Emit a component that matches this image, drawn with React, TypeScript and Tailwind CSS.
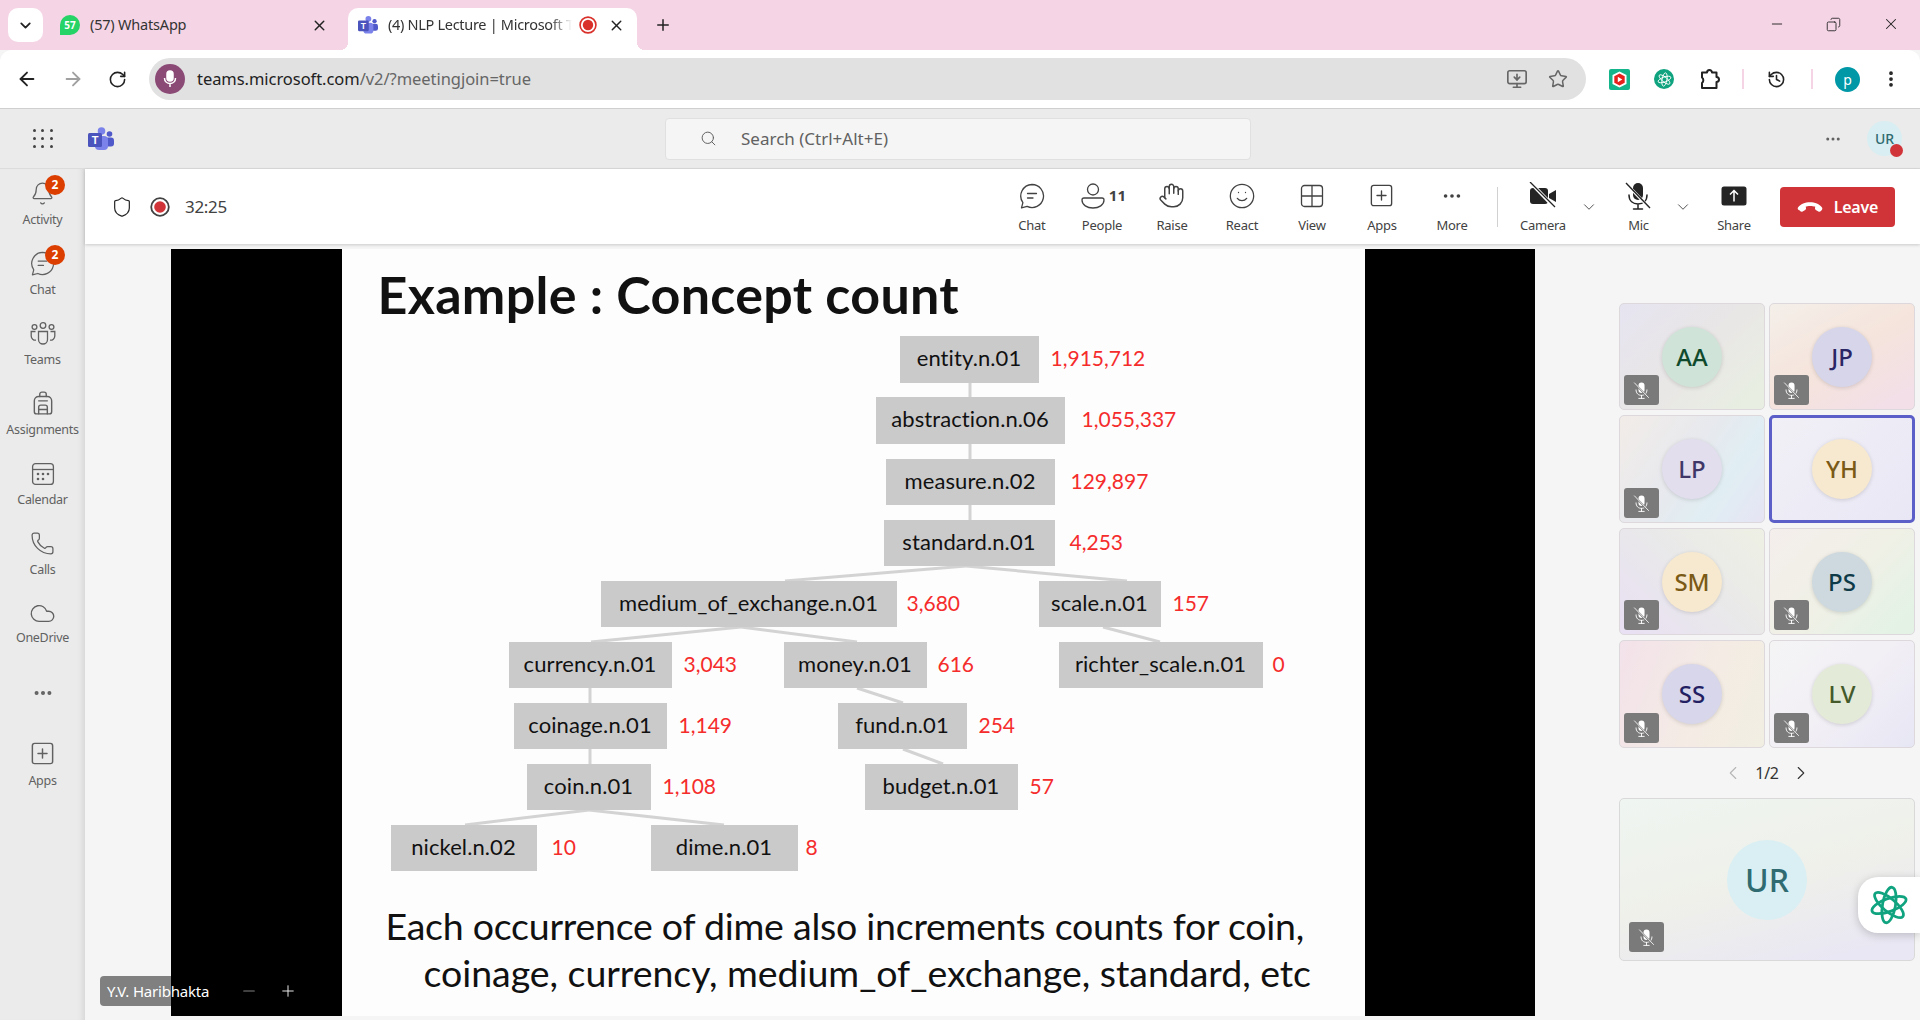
import React, { ReactNode } from 'react';
import {
  ArrowLeft, ArrowRight, RotateCw, Star, MonitorDown, History, EllipsisVertical, Ellipsis, Search, Bell, Backpack,
  Cloud, Phone, Shield, Hand, Smile, SquarePlus, ChevronDown, ChevronLeft, ChevronRight, X, Plus, Minus, Copy,
} from 'lucide-react';

const Gpt = ({ size, color, stroke = 2.8 }: { size: number; color: string; stroke?: number }) => (
  <svg width={size} height={size} viewBox="0 0 40 40" fill="none" stroke={color} strokeWidth={stroke}>
    <ellipse cx="20" cy="20" rx="18" ry="6.5" transform="rotate(100 20 20)" />
    <ellipse cx="20" cy="20" rx="18" ry="6.5" transform="rotate(40 20 20)" />
    <ellipse cx="20" cy="20" rx="18" ry="6.5" transform="rotate(160 20 20)" />
  </svg>
);

const TeamsLogo = ({ size }: { size: number }) => (
  <svg width={size} height={size} viewBox="0 0 26 24">
    <circle cx="21.5" cy="7" r="2.8" fill="#5059c9" />
    <rect x="17" y="10.5" width="9" height="9" rx="3" fill="#5059c9" />
    <circle cx="13.5" cy="4" r="3.8" fill="#7b83eb" />
    <rect x="7" y="9" width="13" height="14" rx="4" fill="#7b83eb" />
    <rect x="0" y="6" width="14" height="14" rx="1.5" fill="#4b53bc" />
    <text x="7" y="17" textAnchor="middle" fontSize="11" fontWeight="700" fill="#fff" fontFamily="'Liberation Sans', sans-serif">T</text>
  </svg>
);

const ChatIcon = ({ size = 26 }: { size?: number }) => (
  <svg width={size} height={size} viewBox="0 0 26 26" fill="none" stroke="currentColor" strokeWidth="1.3" strokeLinecap="round" strokeLinejoin="round">
    <path d="M13 1.5a11.5 11.5 0 1 1-4.9 21.9l-5.6 1.4 1.4-5.2A11.5 11.5 0 0 1 13 1.5Z" />
    <path d="M8.5 10.5h9M8.5 15h5.5" />
  </svg>
);

const PeopleIcon = () => (
  <svg width="24" height="26" viewBox="0 0 24 26" fill="none" stroke="currentColor" strokeWidth="1.3">
    <circle cx="12" cy="6.5" r="5.5" />
    <path d="M3 15h18a2 2 0 0 1 2 2c0 5-5 8-11 8S1 22 1 17a2 2 0 0 1 2-2Z" />
  </svg>
);

const TeamsIcon = () => (
  <svg width="26" height="24" viewBox="0 0 26 24" fill="none" stroke="currentColor" strokeWidth="1.3">
    <circle cx="13" cy="3.5" r="2.8" />
    <circle cx="4.5" cy="5" r="2.4" />
    <circle cx="21.5" cy="5" r="2.4" />
    <path d="M8.5 9.5h9v8a4.5 4.5 0 0 1-9 0Z" />
    <path d="M5.5 9.5H1.2v4.5a4.2 4.2 0 0 0 4.8 4.1M20.5 9.5h4.3v4.5a4.2 4.2 0 0 1-4.8 4.1" />
  </svg>
);

const CalendarIcon = () => (
  <svg width="24" height="24" viewBox="0 0 24 24" fill="none" stroke="currentColor" strokeWidth="1.3">
    <rect x="1.6" y="1.6" width="20.8" height="20.8" rx="3" />
    <path d="M1.6 7.5h20.8" />
    <g fill="currentColor" stroke="none">
      <circle cx="7" cy="12" r="1.3" /><circle cx="12" cy="12" r="1.3" /><circle cx="17" cy="12" r="1.3" />
      <circle cx="7" cy="17" r="1.3" /><circle cx="12" cy="17" r="1.3" />
    </g>
  </svg>
);

const ViewIcon = () => (
  <svg width="24" height="24" viewBox="0 0 24 24" fill="none" stroke="currentColor" strokeWidth="1.3">
    <rect x="1.5" y="1.5" width="21" height="21" rx="3" />
    <path d="M12 1.5v21M1.5 12h21" />
  </svg>
);

const ExtPuzzle = () => (
  <svg width="22" height="22" viewBox="0 0 22 22" fill="none" stroke="#222" strokeWidth="2" strokeLinejoin="round">
    <path d="M3 4.500h5a2.500 2.500 0 0 1 5 0h4.500V9a2.500 2.500 0 0 1 0 5v6H3v-5a3.500 3.500 0 0 0 0-5.500Z" />
  </svg>
);

const ExtPlay = () => (
  <svg width="21" height="21" viewBox="0 0 21 21">
    <rect width="21" height="21" rx="2" fill="#14b58a" />
    <path d="M10.500 2.500 17.500 6v9l-7 3.500L3.500 15V6Z" fill="#fff" />
    <path d="M10.500 4.500 15.700 7.200v6.600l-5.200 2.700-5.200-2.700V7.200Z" fill="#e8201c" />
    <path d="M8.800 7.800l4.500 2.700-4.500 2.700Z" fill="#fff" />
  </svg>
);

const CameraOff = () => (
  <svg width="28" height="28" viewBox="0 0 28 28" fill="none">
    <rect x="1" y="6" width="18" height="16" rx="3" fill="#242424" />
    <path d="M20 12l7-4v12l-7-4Z" fill="#242424" />
    <path d="M2 1l24 25" stroke="#fff" strokeWidth="3.5" />
    <path d="M1 0l25 25" stroke="#242424" strokeWidth="1.3" />
  </svg>
);

const MicOff = ({ size = 28, color = '#242424', gap = '#fff' }: { size?: number; color?: string; gap?: string }) => (
  <svg width={size} height={size} viewBox="0 0 28 28" fill="none">
    <rect x="9" y="1" width="10" height="17" rx="5" fill={color} />
    <path d="M5 13c0 6 4 9 9 9s9-3 9-9M14 22v5M9.5 27h9" stroke={color} strokeWidth="1.5" strokeLinecap="round" />
    <path d="M3 2.5l24 25" stroke={gap} strokeWidth="3" />
    <path d="M2 1l24 25" stroke={color} strokeWidth="1.4" />
  </svg>
);

const ShareIcon = () => (
  <svg width="26" height="20" viewBox="0 0 26 20">
    <rect x="0.5" y="0.5" width="25" height="19" rx="2.5" fill="#242424" />
    <path d="M13 15.5V5M9 8.5l4-4 4 4" fill="none" stroke="#fff" strokeWidth="1.5" />
  </svg>
);

const HangUp = () => (
  <svg width="26" height="12" viewBox="0 0 26 12" fill="#fff">
    <path d="M1 6.500C6-.5 20-.5 25 6.500c.6 1 .3 2-.4 2.800l-1 1c-.6.6-1.500.6-2.200.2l-2.600-1.600c-.6-.4-.9-1-.8-1.700l.2-1.600C15.500 4.700 10.500 4.700 8.800 5.600l.2 1.600c.1.7-.2 1.300-.8 1.700l-2.600 1.600c-.7.4-1.600.4-2.200-.2l-1-1C.7 8.500.4 7.500 1 6.500Z" />
  </svg>
);

const RecordDot = ({ ring, dot, size }: { ring: string; dot: string; size: number }) => (
  <svg width={size} height={size} viewBox="0 0 20 20">
    <circle cx="10" cy="10" r="8.8" fill="#fff" stroke={ring} strokeWidth="1.8" />
    <circle cx="10" cy="10" r="5.8" fill={dot} />
  </svg>
);

const RailItem = ({ label, icon, badge, h = 'h-[70px]', iconH = 'h-[39px]' }: { label: string; icon: ReactNode; badge?: boolean; h?: string; iconH?: string }) => (
  <div className={`relative flex flex-col items-center justify-start ${h} text-[#616161]`}>
    <div className={`flex ${iconH} items-end justify-center pb-[2px]`}>{icon}</div>
    <span className="mt-[4px] text-[12.5px] leading-[16px] tracking-[-0.3px]">{label}</span>
    {badge && (
      <span className="absolute left-[45px] top-[6px] flex h-5 w-5 items-center justify-center rounded-full bg-[#dc3e00] text-[12px] font-bold text-white">2</span>
    )}
  </div>
);

const BarButton = ({ label, icon, w = 'w-[70px]' }: { label: string; icon: ReactNode; w?: string }) => (
  <div className={`flex ${w} flex-col items-center text-[#424242]`}>
    <div className="flex h-[30px] items-center justify-center">{icon}</div>
    <span className="mt-[6px] text-[13px] leading-[16px] tracking-[-0.25px]">{label}</span>
  </div>
);

const Badge = ({ className }: { className: string }) => (
  <div className={`absolute flex h-[30px] w-[35px] items-center justify-center rounded-[3px] bg-[#7a7a7a] ${className}`}>
    <MicOff size={17} color="#fff" gap="#7a7a7a" />
  </div>
);

const tiles = [
  { t: 'AA', h: 'h-[107px]', bg: 'bg-[linear-gradient(135deg,#e6e4f0,#e9e6e6_50%,#e8eee2_90%)]', c: 'bg-[#d0e3d8] text-[#0f4a2c]' },
  { t: 'JP', h: 'h-[107px]', bg: 'bg-[linear-gradient(150deg,#f4efe9,#f5e4dc_50%,#f2dfe8_90%)]', c: 'bg-[#d6d5ea] text-[#2a2564]' },
  { t: 'LP', h: 'h-[108px]', bg: 'bg-[linear-gradient(125deg,#f2ece8,#e7e9ee_45%,#e0eef3_70%,#e6e4f4)]', c: 'bg-[#e2deee] text-[#3f3768]' },
  { t: 'YH', h: 'h-[108px]', bg: 'bg-[linear-gradient(135deg,#f1f0f6,#e9e7f5)]', c: 'bg-[#f7e9cf] text-[#7a5a16]', active: true },
  { t: 'SM', h: 'h-[107px]', bg: 'bg-[linear-gradient(45deg,#e9e0f4,#e9e8ea_50%,#eef0e4)]', c: 'bg-[#f7e9cf] text-[#7a5a16]' },
  { t: 'PS', h: 'h-[107px]', bg: 'bg-[linear-gradient(135deg,#f4eeec,#f0f0e6_50%,#e4f2e6_90%)]', c: 'bg-[#cdd9de] text-[#0f3a48]' },
  { t: 'SS', h: 'h-[108px]', bg: 'bg-[linear-gradient(110deg,#f3e2ea,#f4ece4_60%,#f1eee2)]', c: 'bg-[#d7d6ea] text-[#241f63]' },
  { t: 'LV', h: 'h-[108px]', bg: 'bg-[linear-gradient(135deg,#f4f4f5,#f2eff5_50%,#e7e6f4)]', c: 'bg-[#e4ead8] text-[#445a2a]' },
];

const nodes = [
  { t: 'entity.n.01', c: 'left-[558px] top-[87px] w-[139px] h-[47px]' },
  { t: 'abstraction.n.06', c: 'left-[534px] top-[148px] w-[189px] h-[47px]' },
  { t: 'measure.n.02', c: 'left-[544px] top-[210px] w-[169px] h-[46px]' },
  { t: 'standard.n.01', c: 'left-[542px] top-[271px] w-[171px] h-[46px]' },
  { t: 'medium_of_exchange.n.01', c: 'left-[259px] top-[332px] w-[296px] h-[46px]' },
  { t: 'scale.n.01', c: 'left-[697px] top-[332px] w-[122px] h-[46px]' },
  { t: 'currency.n.01', c: 'left-[167px] top-[393px] w-[163px] h-[46px]' },
  { t: 'money.n.01', c: 'left-[442px] top-[393px] w-[143px] h-[46px]' },
  { t: 'richter_scale.n.01', c: 'left-[717px] top-[393px] w-[204px] h-[46px]' },
  { t: 'coinage.n.01', c: 'left-[172px] top-[454px] w-[153px] h-[46px]' },
  { t: 'fund.n.01', c: 'left-[496px] top-[454px] w-[129px] h-[46px]' },
  { t: 'coin.n.01', c: 'left-[185px] top-[515px] w-[124px] h-[46px]' },
  { t: 'budget.n.01', c: 'left-[523px] top-[515px] w-[153px] h-[46px]' },
  { t: 'nickel.n.02', c: 'left-[49px] top-[576px] w-[146px] h-[46px]' },
  { t: 'dime.n.01', c: 'left-[309px] top-[576px] w-[147px] h-[46px]' },
];

const counts = [
  { t: '1,915,712', c: 'left-[709px] top-[87px]' },
  { t: '1,055,337', c: 'left-[740px] top-[148px]' },
  { t: '129,897', c: 'left-[729px] top-[210px]' },
  { t: '4,253', c: 'left-[728px] top-[271px]' },
  { t: '3,680', c: 'left-[565px] top-[332px]' },
  { t: '157', c: 'left-[831px] top-[332px]' },
  { t: '3,043', c: 'left-[342px] top-[393px]' },
  { t: '616', c: 'left-[596px] top-[393px]' },
  { t: '0', c: 'left-[931px] top-[393px]' },
  { t: '1,149', c: 'left-[337px] top-[454px]' },
  { t: '254', c: 'left-[637px] top-[454px]' },
  { t: '1,108', c: 'left-[321px] top-[515px]' },
  { t: '57', c: 'left-[688px] top-[515px]' },
  { t: '10', c: 'left-[210px] top-[576px]' },
  { t: '8', c: 'left-[464px] top-[576px]' },
];

const links = [
  [628, 134, 628, 148], [628, 195, 628, 210], [628, 256, 628, 271],
  [624, 317, 443, 332], [624, 317, 785, 332],
  [399, 378, 249, 393], [399, 378, 515, 393], [761, 378, 818, 393],
  [248, 439, 248, 454], [248, 500, 248, 515], [515, 439, 561, 454], [561, 500, 601, 515],
  [247, 561, 123, 576], [247, 561, 382, 576],
];

export default function App() {
  return (
    <div className="relative flex h-screen w-full flex-col overflow-hidden bg-[#f5f5f5] font-['Noto_Sans',sans-serif]">
      {/* chrome tabs */}
      <div className="flex h-[50px] shrink-0 bg-[#f5d5e5] pl-2 pt-2">
        <div className="flex h-[34px] w-[35px] items-center justify-center rounded-[10px] bg-white">
          <ChevronDown size={17} strokeWidth={2.5} className="text-[#222]" />
        </div>
        <div className="ml-[17px] flex h-[34px] w-[268px] items-center text-[#333]">
          <div className="flex h-5 w-5 items-center justify-center rounded-full rounded-bl-[3px] bg-[#25d366] text-[10px] font-bold text-white">57</div>
          <span className="ml-[10px] flex-1 text-[14.5px] tracking-[-0.2px]">(57) WhatsApp</span>
          <X size={17} strokeWidth={2} className="text-[#222]" />
        </div>
        <div className="relative ml-[20px] flex h-[42px] w-[289px] items-center rounded-t-[10px] bg-white pb-2 pl-[10px] text-[#333]">
          <span className="absolute bottom-0 left-[-8px] h-2 w-2 bg-[radial-gradient(circle_at_0_0,transparent_8px,white_8px)]" />
          <span className="absolute bottom-0 right-[-8px] h-2 w-2 bg-[radial-gradient(circle_at_100%_0,transparent_8px,white_8px)]" />
          <TeamsLogo size={20} />
          <span className="ml-[10px] w-[184px] whitespace-nowrap text-[14.5px] tracking-[-0.3px] [mask-image:linear-gradient(90deg,black_88%,transparent)]">(4) NLP Lecture | Microsoft T</span>
          <span className="ml-[7px]"><RecordDot ring="#d9302a" dot="#d9302a" size={18} /></span>
          <X size={17} strokeWidth={2} className="ml-[11px] text-[#222]" />
        </div>
        <Plus size={18} strokeWidth={2} className="ml-[17px] mt-[8px] text-[#222]" />
        <div className="ml-auto mr-[20px] mt-[8px] flex h-4 items-center gap-[41px] text-[#222]">
          <Minus size={16} strokeWidth={1.4} />
          <Copy size={15} strokeWidth={1.4} className="-scale-x-100" />
          <X size={18} strokeWidth={1.4} />
        </div>
      </div>

      {/* chrome toolbar */}
      <div className="flex h-[59px] shrink-0 items-center rounded-t-[12px] border-b border-[#cfcfcf] bg-white pl-[15px] text-[#444]">
        <ArrowLeft size={22} strokeWidth={2} className="ml-px text-[#222]" />
        <ArrowRight size={22} strokeWidth={2} className="ml-[24px] text-[#a0a0a0]" />
        <RotateCw size={19} strokeWidth={2} className="ml-[24px] text-[#222]" />
        <div className="ml-[22px] flex h-[42px] w-[1437px] items-center rounded-full bg-[#e1e1e1] pl-[6px] pr-[18px]">
          <div className="flex h-[30px] w-[30px] items-center justify-center rounded-full bg-[#8b4a76]">
            <svg width="16" height="18" viewBox="0 0 16 18" fill="none" stroke="#fff" strokeWidth="1.5">
              <rect x="5" y="1" width="6" height="10" rx="3" fill="#fff" />
              <path d="M2.500 8c0 3.500 2.500 5.500 5.500 5.500s5.500-2 5.500-5.500M8 13.500V17" />
            </svg>
          </div>
          <span className="ml-[12px] flex-1 text-[16.5px] tracking-[-0.05px] text-[#666]"><span className="text-[#222]">teams.microsoft.com</span>/v2/?meetingjoin=true</span>
          <MonitorDown size={22} strokeWidth={1.8} className="text-[#666]" />
          <Star size={20} strokeWidth={1.8} className="ml-[20px] text-[#666]" />
        </div>
        <div className="ml-[23px]"><ExtPlay /></div>
        <div className="ml-[24px] flex h-[20px] w-[20px] items-center justify-center rounded-full bg-[#10a37f]"><Gpt size={15} color="#fff" stroke={2.4} /></div>
        <div className="ml-[25px]"><ExtPuzzle /></div>
        <div className="ml-[21px] h-[20px] w-[2px] bg-[#f5d5e5]" />
        <History size={19} strokeWidth={2} className="ml-[23px] text-[#222]" />
        <div className="ml-[25px] h-[20px] w-[2px] bg-[#f5d5e5]" />
        <div className="ml-[22px] flex h-[25px] w-[25px] items-center justify-center rounded-full bg-[#0097a7] text-[14px] text-white">p</div>
        <EllipsisVertical size={20} strokeWidth={2.5} className="ml-[21px] text-[#222]" />
      </div>

      {/* teams header */}
      <div className="flex h-[60px] shrink-0 items-center border-b border-[#dcdcdc] bg-[#ebebeb]">
        <div className="ml-[33px] grid w-[20px] grid-cols-3 gap-[5px]">
          {Array.from({ length: 9 }).map((_, i) => (
            <span key={i} className="h-[3px] w-[3px] rounded-full bg-[#424242]" />
          ))}
        </div>
        <div className="ml-[35px]"><TeamsLogo size={26} /></div>
        <div className="ml-[551px] flex h-[42px] w-[586px] items-center rounded-[4px] border border-[#e0e0e0] bg-[#f5f5f5] pl-[34px] text-[#616161]">
          <Search size={17} strokeWidth={1.4} />
          <span className="ml-[24px] text-[17px]">Search (Ctrl+Alt+E)</span>
        </div>
        <Ellipsis size={18} className="ml-[573px] text-[#616161]" />
        <div className="relative ml-[25px] flex h-[35px] w-[35px] items-center justify-center rounded-full bg-[#d9eef2] text-[14px] font-medium text-[#2f6b70]">
          UR
          <span className="absolute bottom-[-1px] right-[-1px] h-[13px] w-[13px] rounded-full bg-[#d13438]" />
        </div>
      </div>

      <div className="flex min-h-0 flex-1">
        {/* teams rail */}
        <div className="flex w-[85px] shrink-0 flex-col bg-[#ebebeb] shadow-[inset_-7px_0_6px_-5px_rgba(0,0,0,0.1)]">
          <RailItem label="Activity" badge icon={<Bell size={25} strokeWidth={1.2} />} />
          <RailItem label="Chat" badge icon={<ChatIcon size={25} />} />
          <RailItem label="Teams" icon={<TeamsIcon />} />
          <RailItem label="Assignments" icon={<Backpack size={26} strokeWidth={1.3} />} />
          <RailItem label="Calendar" icon={<CalendarIcon />} />
          <RailItem label="Calls" icon={<Phone size={25} strokeWidth={1.2} />} />
          <RailItem label="OneDrive" h="h-[68px]" iconH="h-[37px]" icon={<Cloud size={27} strokeWidth={1.2} className="translate-y-[3px]" />} />
          <div className="flex h-[73px] items-start justify-center pt-[25px] text-[#616161]"><Ellipsis size={22} strokeWidth={2.4} /></div>
          <RailItem label="Apps" icon={<SquarePlus size={27} strokeWidth={1.3} />} />
        </div>

        <div className="relative flex min-w-0 flex-1 flex-col">
          {/* meeting bar */}
          <div className="flex h-[75px] shrink-0 items-center bg-white pl-[26px] shadow-[0_1px_3px_rgba(0,0,0,0.18)]">
            <Shield size={22} strokeWidth={1.3} className="text-[#242424]" />
            <span className="ml-[17px]"><RecordDot ring="#424242" dot="#d13438" size={20} /></span>
            <span className="ml-[15px] text-[17px] tracking-[-0.3px] text-[#424242]">32:25</span>
            <div className="ml-[770px] flex items-center">
              <BarButton label="Chat" icon={<ChatIcon />} />
              <BarButton label="People" icon={<span className="flex items-center gap-[4px] pl-[3px]"><PeopleIcon /><span className="text-[15px] font-bold">11</span></span>} />
              <BarButton label="Raise" icon={<Hand size={27} strokeWidth={1.3} />} />
              <BarButton label="React" icon={<Smile size={28} strokeWidth={1.1} />} />
              <BarButton label="View" icon={<ViewIcon />} />
              <BarButton label="Apps" icon={<SquarePlus size={27} strokeWidth={1.2} />} />
              <BarButton label="More" icon={<Ellipsis size={22} strokeWidth={2} />} />
              <div className="ml-[10px] h-[40px] w-px bg-[#d1d1d1]" />
              <BarButton w="w-[90px]" label="Camera" icon={<CameraOff />} />
              <ChevronDown size={18} strokeWidth={1.2} className="ml-[-8px] mr-[-3px] text-[#424242]" />
              <BarButton w="w-[87px]" label="Mic" icon={<MicOff />} />
              <ChevronDown size={18} strokeWidth={1.2} className="ml-[-8px] mr-[-3px] text-[#424242]" />
              <BarButton w="w-[90px]" label="Share" icon={<ShareIcon />} />
              <div className="ml-[1px] flex h-[40px] w-[115px] items-center justify-center gap-[11px] rounded-[4px] bg-[#d13438] text-[16px] font-semibold tracking-[-0.2px] text-white">
                <HangUp />
                Leave
              </div>
            </div>
          </div>

          <div className="flex min-h-0 flex-1 pt-[5px]">
            {/* shared slide */}
            <div className="ml-[86px] flex h-[767px] w-[1364px] shrink-0 justify-center bg-black">
              <div className="relative h-full w-[1023px] bg-[#fdfdfd] font-['Lato',sans-serif] text-[#111]">
                <div className="absolute left-[36px] top-[15px] whitespace-nowrap text-[52px] font-bold leading-[60px] tracking-[0.3px]">Example : Concept count</div>
                <svg width="1023" height="767" className="absolute left-0 top-0" stroke="#d3d3d3" strokeWidth="3">
                  {links.map((l, i) => (
                    <line key={i} x1={l[0]} y1={l[1]} x2={l[2]} y2={l[3]} />
                  ))}
                </svg>
                {nodes.map((n) => (
                  <div key={n.t} className={`absolute flex items-center justify-center bg-[#cbcacb] pb-[4px] text-[22px] tracking-[0.1px] ${n.c}`}>{n.t}</div>
                ))}
                {counts.map((n) => (
                  <div key={n.t} className={`absolute flex h-[46px] items-center pb-[3px] text-[21px] text-[#f52c2c] ${n.c}`}>{n.t}</div>
                ))}
                <div className="absolute left-[44px] top-[653px] text-[37.5px] leading-[47px]">
                  <div className="whitespace-nowrap tracking-[-0.25px]">Each occurrence of dime also increments counts for coin,</div>
                  <div className="ml-[38px] whitespace-nowrap tracking-[-0.05px]">coinage, currency, medium_of_exchange, standard, etc</div>
                </div>
              </div>
            </div>

            {/* participants */}
            <div className="ml-[84px] mt-[54px] w-[296px] shrink-0">
              <div className="grid grid-cols-2 gap-x-1 gap-y-[5px]">
                {tiles.map((p) => (
                  <div key={p.t} className={`relative flex items-center justify-center rounded-[5px] ${p.h} ${p.bg} ${p.active ? 'border-[3px] border-[#5b5fc7]' : 'border border-[#dcd8dc]'}`}>
                    <div className={`flex h-[60px] w-[60px] items-center justify-center rounded-full text-[24px] font-medium shadow-[0_1px_4px_rgba(0,0,0,0.14)] ${p.c}`}>{p.t}</div>
                    {!p.active && <Badge className="bottom-[4px] left-[4px]" />}
                  </div>
                ))}
              </div>
              <div className="flex h-[50px] items-center justify-center text-[#333]">
                <ChevronLeft size={22} strokeWidth={1.2} className="text-[#b5b5b5]" />
                <span className="mx-[11px] text-[16px] tracking-[-0.3px]">1/2</span>
                <ChevronRight size={22} strokeWidth={1.2} />
              </div>
              <div className="relative flex h-[163px] items-center justify-center rounded-[5px] border border-[#d9d9d9] bg-[linear-gradient(165deg,#eff5f1,#eff0ea_50%,#e9e7f3_90%)]">
                <div className="flex h-[80px] w-[80px] items-center justify-center rounded-full bg-[#d9eff3] text-[32px] font-medium text-[#2f6b70]">UR</div>
                <Badge className="bottom-[8px] left-[9px]" />
              </div>
            </div>
          </div>

          {/* presenter tag */}
          <div className="absolute left-[15px] top-[807px] flex h-[30px] w-[210px] items-center rounded-[4px] bg-[linear-gradient(90deg,#808080_71px,transparent_71px)] pl-[7px] text-[15px] tracking-[-0.2px] text-white">
            <span className="w-[133px] whitespace-nowrap">Y.V. Haribhakta</span>
            <Minus size={18} strokeWidth={1.5} className="text-[#808080]" />
            <Plus size={18} strokeWidth={1.2} className="ml-[21px]" />
          </div>
        </div>
      </div>

      {/* floating assistant */}
      <div className="absolute right-0 top-[877px] flex h-[56px] w-[62px] items-center justify-center rounded-l-[20px] bg-white shadow-[0_2px_10px_rgba(0,0,0,0.2)]">
        <Gpt size={40} color="#10a37f" />
      </div>
    </div>
  );
}
